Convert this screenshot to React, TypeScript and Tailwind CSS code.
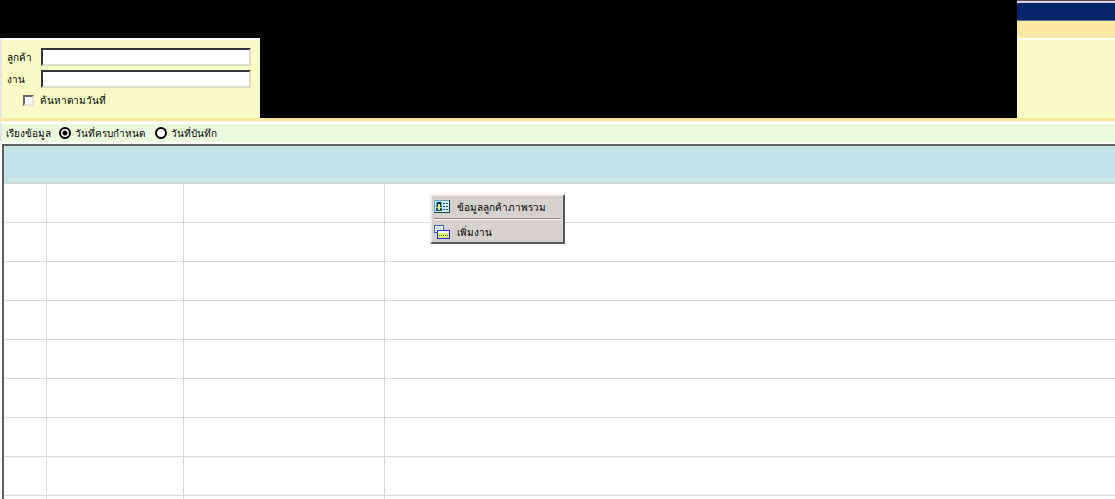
import React from "react";

const ROWS = Array.from({ length: 9 }, (_, i) => i);

const SORT_OPTIONS = [
  { value: "due", label: "วันที่ครบกำหนด" },
  { value: "saved", label: "วันที่บันทึก" },
];

function CustomerCardIcon() {
  return (
    <svg width="16" height="13" viewBox="0 0 16 13" shapeRendering="crispEdges" aria-hidden="true">
      <rect x="0" y="0" width="16" height="13" fill="#24424f" />
      <rect x="0" y="0" width="15" height="12" fill="#5aa5bd" />
      <rect x="1" y="1" width="14" height="11" fill="#c9f1fb" />
      <rect x="2" y="2" width="6" height="9" fill="#3fa9d8" />
      <rect x="3" y="2" width="4" height="5" fill="#12304a" />
      <rect x="4" y="4" width="2" height="3" fill="#e8dc7a" />
      <rect x="3" y="7" width="4" height="1" fill="#d8f070" />
      <rect x="2" y="8" width="6" height="3" fill="#174c78" />
      <rect x="4" y="8" width="2" height="2" fill="#d8f070" />
      <path d="M9 3.5h2M12 3.5h2M9 6.5h2M12 6.5h2M9 9.5h2M12 9.5h2" stroke="#2b5064" />
    </svg>
  );
}

function AddJobIcon() {
  return (
    <svg width="16" height="14" viewBox="0 0 16 14" shapeRendering="crispEdges" aria-hidden="true">
      <rect x="0.5" y="0.5" width="9" height="7" fill="#eef4fb" stroke="#3c62a8" />
      <path d="M2 3.5h6" stroke="#9aa9c0" strokeDasharray="1 1" />
      <rect x="3.5" y="5.5" width="12" height="8" fill="#d9f06a" stroke="#2a22d8" />
      <rect x="4" y="6" width="11" height="2" fill="#f4fbff" />
      <path d="M5 10.5h9" stroke="#5d7a30" strokeDasharray="1 1" />
    </svg>
  );
}

function SearchField({ id, label }: { id: string; label: string }) {
  return (
    <div className="flex items-center">
      <label htmlFor={id} className="w-[34px]">
        {label}
      </label>
      <input
        id={id}
        type="text"
        className="h-[18px] w-[210px] border-2 border-t-[#333340] border-l-[#333340] border-r-[#dcdccb] border-b-[#dcdccb] bg-white px-1 outline-none"
      />
    </div>
  );
}

function SearchForm() {
  return (
    <form className="flex w-[260px] flex-col gap-1 border-t-2 border-l-2 border-t-white border-l-[#e4e4e4] bg-[#f6fbc6] pt-2 pl-[5px]">
      <SearchField id="customer" label="ลูกค้า" />
      <SearchField id="job" label="งาน" />
      <label className="flex items-center gap-[6px] pl-4">
        <input
          type="checkbox"
          className="size-[11px] appearance-none border-2 border-t-[#66666c] border-l-[#66666c] border-r-[#e6e6d8] border-b-[#e6e6d8] bg-white"
        />
        ค้นหาตามวันที่
      </label>
    </form>
  );
}

function SortBar() {
  return (
    <fieldset className="flex h-[22px] items-center border-y-2 border-l-2 border-y-white border-l-[#e4e4e4] bg-[#ebfadd] pl-1">
      <span className="w-[53px]">เรียงข้อมูล</span>
      {SORT_OPTIONS.map((option, i) => (
        <label key={option.value} className="mr-[10px] flex items-center gap-1">
          <input
            type="radio"
            name="sort"
            value={option.value}
            defaultChecked={i === 0}
            className="size-3 appearance-none rounded-full border-2 border-black bg-white checked:bg-[radial-gradient(circle,#000_2px,#fff_3px)]"
          />
          {option.label}
        </label>
      ))}
    </fieldset>
  );
}

function JobTable() {
  return (
    <table className="w-full table-fixed border-collapse border-t-2 border-l-2 border-[#606064]">
      <colgroup>
        <col className="w-[43px]" />
        <col className="w-[137px]" />
        <col className="w-[201px]" />
        <col />
      </colgroup>
      <thead>
        <tr className="h-[38px] border-b border-[#d4d4d0] bg-[#c6e3e7]">
          <th colSpan={4} />
        </tr>
      </thead>
      <tbody>
        {ROWS.map((row) => (
          <tr key={row} className="h-[39px] border-b border-[#d8d8d4] bg-white">
            <td className="border-r border-[#d8d8d4]" />
            <td className="border-r border-[#d8d8d4]" />
            <td className="border-r border-[#d8d8d4]" />
            <td />
          </tr>
        ))}
      </tbody>
    </table>
  );
}

function ContextMenu() {
  return (
    <div
      role="menu"
      className="absolute top-[194px] left-[430px] w-[135px] border-2 border-t-[#ecebe6] border-l-[#ecebe6] border-r-[#55555a] border-b-[#55555a] bg-[#d5d2cd] px-[2px]"
    >
      <button role="menuitem" type="button" className="flex h-[21px] w-full items-center gap-[7px]">
        <CustomerCardIcon />
        ข้อมูลลูกค้าภาพรวม
      </button>
      <hr className="my-px border-t-[#85857f] border-b border-b-white" />
      <button role="menuitem" type="button" className="flex h-[21px] w-full items-center gap-[7px]">
        <AddJobIcon />
        เพิ่มงาน
      </button>
    </div>
  );
}

export default function App() {
  return (
    <div className="relative h-screen overflow-hidden bg-white font-['Noto_Sans','Liberation_Sans',sans-serif] text-[10px] leading-4 text-black">
      <header className="flex h-[38px] bg-black">
        <div className="ml-auto flex w-[98px] flex-col border-t border-[#5a5058] bg-[#f9e9a5]">
          <div className="h-5 border-t-2 border-b border-t-[#d9d5dc] border-b-[#65709a] bg-[#072469]" />
        </div>
      </header>
      <div className="flex h-20 bg-black">
        <SearchForm />
        <div className="ml-auto w-[98px] border-t-2 border-white bg-[#f6fbc6]" />
      </div>
      <div className="h-1 border-b border-[#fdf6d8] bg-[#f9e9a0]" />
      <SortBar />
      <div className="pl-[2px]">
        <JobTable />
      </div>
      <ContextMenu />
    </div>
  );
}
